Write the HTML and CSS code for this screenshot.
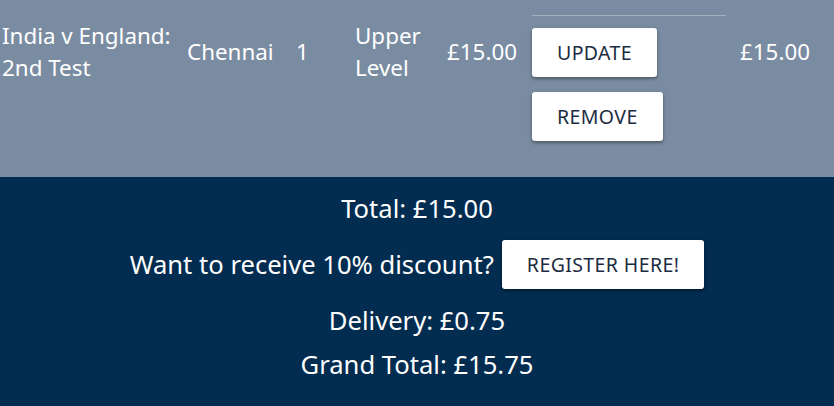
FILE: index.html
```html
<!DOCTYPE html>
<html lang="en">
<head>
<meta charset="utf-8">
<title>Basket</title>
<link rel="stylesheet" href="styles.css">
</head>
<body>
<section class="cart">
  <div class="cart-row">
    <div class="cell">India v England: 2nd Test</div>
    <div class="cell">Chennai</div>
    <div class="cell">1</div>
    <div class="cell">Upper Level</div>
    <div class="cell">£15.00</div>
    <div class="cell actions">
      <input class="qty" type="text" aria-label="Quantity">
      <button class="btn" type="button">Update</button>
      <button class="btn" type="button">Remove</button>
    </div>
    <div class="cell">£15.00</div>
  </div>
</section>
<section class="summary">
  <p class="line">Total: £15.00</p>
  <div class="discount">
    <span>Want to receive 10% discount?</span>
    <button class="btn" type="button">Register here!</button>
  </div>
  <p class="line delivery">Delivery: £0.75</p>
  <p class="line grand">Grand Total: £15.75</p>
</section>
</body>
</html>
```

FILE: styles.css
```css
html, body {
  margin: 0;
  padding: 0;
}
body {
  font-family: "Noto Sans", "Open Sans", sans-serif;
  color: #ffffff;
  background: #022c50;
}
.cart {
  background: #7a8ca1;
  padding-bottom: 36px;
}
.cart-row {
  display: grid;
  grid-template-columns: 185px 109px 59px 92px 85px 208px 1fr;
  align-items: center;
  margin-top: -38px;
  font-size: 22.4px;
  line-height: 32px;
}
.cell {
  padding: 0 2px;
}
.actions {
  display: flex;
  flex-direction: column;
  align-items: flex-start;
}
.qty {
  box-sizing: border-box;
  width: 194px;
  height: 54px;
  margin: 0 0 12px;
  padding: 0;
  background: transparent;
  border: none;
  border-bottom: 1px solid #a7b1bd;
  outline: none;
  font: inherit;
  color: #ffffff;
}
.btn {
  height: 49px;
  padding: 0 25px;
  border: none;
  border-radius: 3px;
  background: #ffffff;
  color: #1b2c42;
  font-family: "Noto Sans", "Open Sans", sans-serif;
  font-size: 19.5px;
  letter-spacing: 0.4px;
  text-transform: uppercase;
  box-shadow: 0 2px 3px rgba(0, 0, 0, 0.28), 0 1px 5px rgba(0, 0, 0, 0.12);
  cursor: pointer;
}
.actions .btn + .btn {
  margin-top: 15px;
}
.summary {
  display: flex;
  flex-direction: column;
  align-items: center;
  padding: 14px 0 23px;
  font-size: 25.6px;
  line-height: 36px;
}
.line {
  margin: 0;
}
.discount {
  display: flex;
  align-items: center;
  gap: 8px;
  margin: 13px 0 14px;
}
.grand {
  margin-top: 8px;
}
```
